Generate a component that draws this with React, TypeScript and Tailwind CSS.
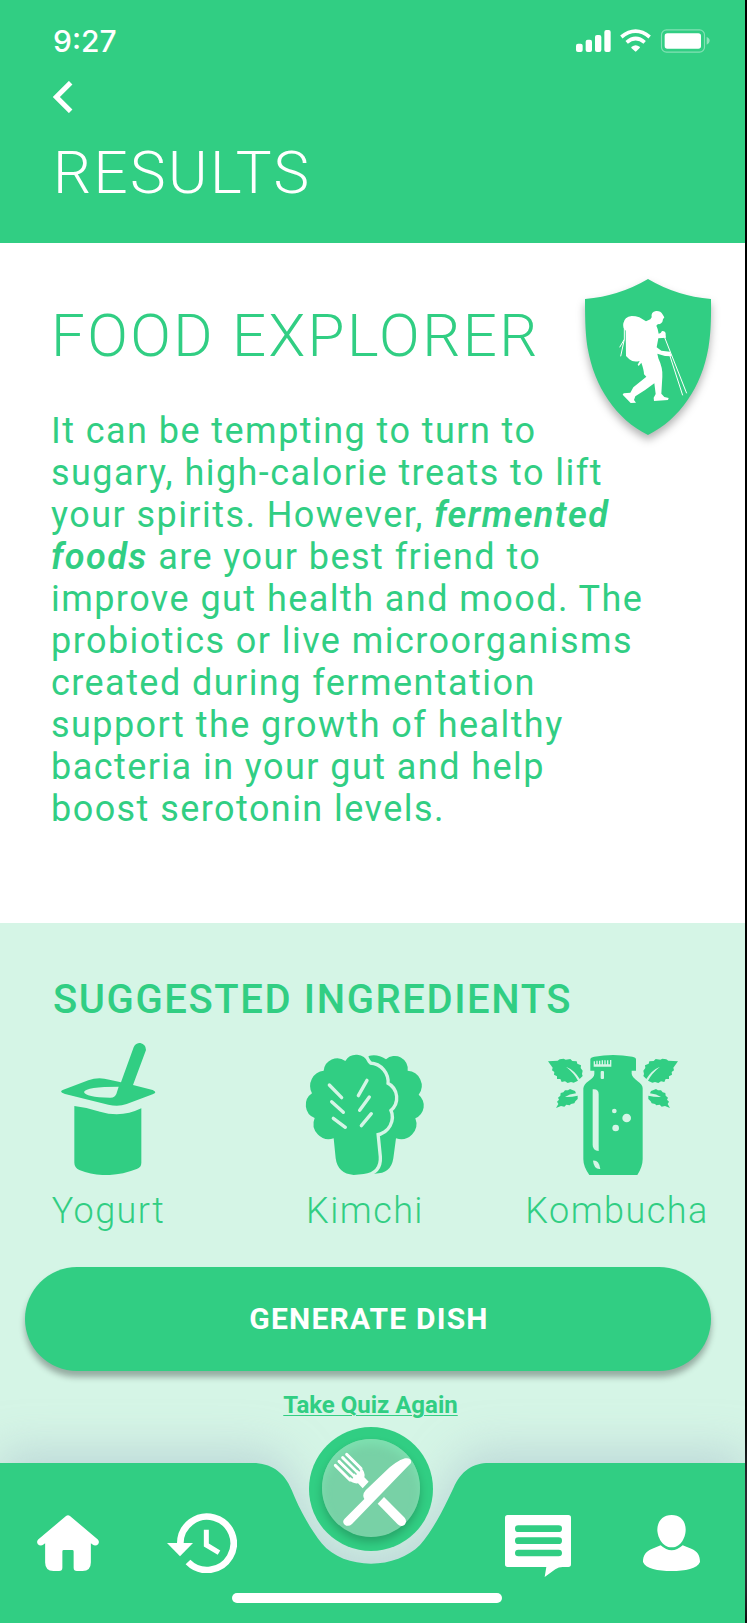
import React from "react";

function StatusIcons() {
  return (
    <svg className="h-6 w-[134px]" viewBox="76 87 402 72" role="img" aria-label="Signal, Wi-Fi and battery">
      <g fill="#fff">
        <rect x="76" y="131" width="20" height="25" rx="6" />
        <rect x="105" y="119" width="19" height="37" rx="6" />
        <rect x="133" y="105" width="19" height="51" rx="6" />
        <rect x="161" y="90" width="19" height="66" rx="6" />
        <path d="M243 140 Q255 131 267 140 Q269 142 267 144 L257 154 Q255 156 253 154 L242 144 Q241 142 243 140Z" />
        <rect x="342" y="100" width="109" height="46" rx="8" />
      </g>
      <g fill="none" stroke="#fff" strokeWidth="11">
        <path d="M212 111 Q255 76 297 111" />
        <path d="M228 127 Q255 104 282 127" />
      </g>
      <rect x="332.500" y="89.500" width="129" height="67" rx="15" fill="none" stroke="#fff" strokeOpacity="0.4" strokeWidth="3.500" />
      <path d="M468 111 Q478 116 477 123 Q477 130 468 134Z" fill="#fff" fillOpacity="0.45" />
    </svg>
  );
}

function ShieldBadge() {
  return (
    <svg
      className="absolute right-[34px] top-9 h-[156px] w-[126px] overflow-visible drop-shadow-[0_5px_4px_rgba(0,0,0,0.3)]"
      viewBox="45 57 378 468"
      role="img"
      aria-label="Explorer badge"
    >
      <path
        fill="#31ce83"
        d="M234 57 Q320 108 423 117 C424 190 421 230 415 265 C395 380 330 478 234 525 C138 478 73 380 53 265 C47 230 45 190 45 117 Q148 108 234 57Z"
      />
      <path
        fill="#fff"
        d="M208 172 L228 184 L241 178 L245 172 Q242 156 258 153 Q272 152 277 162 L283 172 L279 178 L277 186 Q272 194 264 192 L259 197 Q264 206 266 221 L272 219 L276 213 Q289 213 287 226 L288 233 L265 235 L260 262 L274 272 L300 275 L305 289 L285 288 L262 281 L265 295 Q279 325 277 350 L274 401 L283 411 L296 414 L294 420 L252 423 L251 413 L257 402 L253 370 Q225 392 196 409 L192 420 L198 428 L182 429 L158 404 L161 400 L181 398 L190 382 L229 350 L222 343 Q222 330 214 308 L206 318 L203 314 L209 303 Q190 308 178 298 L168 288 L167 212 Q157 204 160 190 Q163 171 185 168 Q197 168 208 172Z"
      />
      <g fill="none" stroke="#fff" strokeWidth="3">
        <path d="M163 203 V238 L149 262 M163 238 L152 289" />
        <path d="M283 230 L350 400 M299 285 L338 406" />
      </g>
    </svg>
  );
}

function YogurtIcon() {
  return (
    <svg className="h-[132px] w-[95px]" viewBox="63 39 285 396" fill="#31ce83" aria-hidden="true">
      <path
        fillRule="evenodd"
        d="M68 180 L145 151 Q175 139 208 149 L243 157 L281 52 Q287 38 301 39 Q318 43 318 60 L279 165 L338 180 Q354 187 338 193 L260 222 Q235 231 205 224 L75 192 Q56 186 68 180Z M132 186 Q138 170 236 170 L229 192 Q224 204 210 203 Q136 202 132 186Z"
      />
      <path d="M103 228 Q140 232 180 245 Q245 264 304 235 V398 Q304 412 290 417 Q200 452 118 420 Q103 412 103 398Z" />
    </svg>
  );
}

function KimchiIcon() {
  const front =
    "M228 98 A38 38 0 0 0 160 93 A41 41 0 0 0 95 122 A46 46 0 0 0 60 190 A42 42 0 0 0 68 264 A46 46 0 0 0 125 325 L131 385 Q137 431 185 435 L215 432 Q263 425 260 380 L253 310 A49 49 0 0 0 291 240 A45 45 0 0 0 283 163 A52 52 0 0 0 234 104Z";
  return (
    <svg className="h-[120px] w-[116px] overflow-visible" viewBox="45 75 348 360" aria-hidden="true">
      <path
        fill="#31ce83"
        d="M230 78 Q255 70 282 88 A39 39 0 0 1 347 122 A45 45 0 0 1 380 194 A42 42 0 0 1 370 265 A46 46 0 0 1 312 325 L304 385 Q297 433 244 431 L250 300 L220 120Z"
      />
      <path d={front} fill="none" stroke="#d5f5e6" strokeWidth="20" />
      <path d={front} fill="#31ce83" />
      <path
        d="M112 165 L149 203 M119 215 L154 247 M124 265 L160 292 M225 151 L199 197 M232 201 L203 241 M238 251 L208 287"
        stroke="#d5f5e6"
        strokeWidth="10"
        strokeLinecap="round"
      />
    </svg>
  );
}

function MintLeaves() {
  return (
    <>
      <path d="M111 94 L140 92 L146 88 L158 86 L164 89 L178 87 L184 93 L197 94 L199 101 L210 106 L209 114 L215 122 L213 132 L215 138 L206 147 Q190 120 165 110 Q190 130 201 152 L188 158 L180 156 L170 159 L162 154 L152 156 L148 147 L138 147 L138 139 L129 134 L130 126 L123 121 L125 113Z" />
      <path d="M135 234 L142 222 L138 215 L144 209 L141 203 L148 197 L149 189 L157 187 L162 181 L171 181 L177 177 L186 181 L192 183 L195 190 Q175 192 162 201 Q180 202 200 197 L200 207 L193 214 L190 220 L180 222 L176 226 L166 224 L160 230 L150 228Z" />
    </>
  );
}

function KombuchaIcon() {
  return (
    <svg className="h-[120px] w-[138px]" viewBox="111 75 414 360" fill="#31ce83" aria-hidden="true">
      <MintLeaves />
      <g transform="translate(612 0) scale(-1 1)">
        <MintLeaves />
      </g>
      <path d="M238 88 Q238 82 250 80 Q306 70 364 80 Q375 82 375 88 V122 H362 V132 Q364 142 380 154 Q395 165 395 175 V388 Q395 410 379 435 H235 Q217 410 217 388 V175 Q219 163 232 154 Q250 142 250 132 V122 H238Z" />
      <g fill="#d5f5e6">
        <rect x="269" y="123" width="10" height="24" rx="3" />
        <path d="M245 178 Q263 176 263 192 V363 Q245 362 245 345Z" />
        <path d="M246 392 Q264 390 268 417 Q249 419 246 392Z" />
        <circle cx="310" cy="243" r="7" />
        <circle cx="347" cy="264" r="13" />
        <circle cx="314" cy="294" r="10" />
        <path d="M248 94 L252 94 V103 H256 V92 H260 V103 H264 V92 H268 V103 H272 V91 H276 V103 H280 V91 H284 V103 H288 V91 H292 V103 H297 V90 H301 V110 H248Z" />
      </g>
    </svg>
  );
}

function HomeIcon() {
  return (
    <svg className="h-14 w-[62px]" viewBox="111 104 186 169" fill="#fff" aria-hidden="true">
      <path d="M198 107 Q204 102 210 107 L294 178 Q300 185 295 192 Q287 199 278 193 L273 189 V247 Q273 272 248 273 H231 Q221 273 221 263 V214 Q221 210 217 210 H191 Q187 210 187 214 V263 Q187 273 177 273 H160 Q135 272 135 247 V189 L130 193 Q121 199 113 192 Q108 185 114 178Z" />
    </svg>
  );
}

function HistoryIcon() {
  return (
    <svg className="h-[60px] w-[70px]" viewBox="501 99 210 180" aria-hidden="true">
      <path d="M541 192 V189 A80 80 0 1 1 564 246" fill="none" stroke="#fff" strokeWidth="20" />
      <path d="M501 189 H579 L540 229Z" fill="#fff" />
      <path d="M619 149 V195 L657 218" fill="none" stroke="#fff" strokeWidth="15" />
    </svg>
  );
}

function ChatIcon() {
  return (
    <svg className="h-[62px] w-[66px]" viewBox="75 105 198 186" aria-hidden="true">
      <path
        fill="#fff"
        d="M83 105 H265 Q273 105 273 113 V253 Q273 261 265 261 H248 Q236 261 226 268 L194 291 L199 261 H83 Q75 261 75 253 V113 Q75 105 83 105Z"
      />
      <path d="M115 146 H236 M115 182 H236 M115 219 H236" stroke="#31ce83" strokeWidth="20" strokeLinecap="round" />
    </svg>
  );
}

function UserIcon() {
  return (
    <svg className="h-14 w-[57px]" viewBox="489 105 171 168" fill="#fff" aria-hidden="true">
      <path d="M575 105 C602 105 617 124 617 149 C617 168 605 202 575 202 C545 202 532 168 532 149 C532 124 548 105 575 105Z" />
      <path d="M542 196 Q575 226 608 196 L634 206 C652 213 660 226 660 246 C653 266 615 273 575 273 C534 273 496 266 489 246 C489 226 497 215 515 207Z" />
    </svg>
  );
}

function CutleryIcon() {
  return (
    <svg className="size-[98px]" viewBox="243 177 294 294" fill="#fff" aria-hidden="true">
      <path d="M311 416 L370 357 Q362 344 374 331 L432 275 Q465 243 492 235 Q513 232 510 249 L333 432 Q322 442 311 434 Q302 425 311 416Z" />
      <path d="M410 371 L429 351 L491 413 Q499 424 491 434 Q480 442 470 433Z" />
      <path d="M322 298 L358 262 Q374 276 370 292 L383 305 L365 325 L351 310 Q334 312 322 298Z" />
      <path
        d="M283 256 L327 300 M294 244 L337 287 M305 233 L348 276 M317 223 L360 266"
        stroke="#fff"
        strokeWidth="9"
        strokeLinecap="round"
      />
      <path d="M292 253 L334 293 M303 242 L345 282 M315 232 L355 272" stroke="#78d1a6" strokeWidth="5" strokeLinecap="round" />
    </svg>
  );
}

const ingredients = [
  { name: "Yogurt", Icon: YogurtIcon },
  { name: "Kimchi", Icon: KimchiIcon },
  { name: "Kombucha", Icon: KombuchaIcon },
];

function TabBar() {
  return (
    <nav aria-label="Main" className="relative h-40">
      <div className="flex h-full drop-shadow-[0_-12px_22px_rgba(163,186,202,0.5)]">
        <div className="flex-1 bg-[#31ce83]" />
        <svg className="h-40 w-[239px]" viewBox="39 249 717 480" aria-hidden="true">
          <path
            fill="#31ce83"
            d="M39 249 C90 249 133 275 155 330 C180 393 215 452 245 490 C280 532 335 551 393 551 C450 551 505 530 540 495 C575 455 605 400 640 325 C662 272 700 249 747 249 H756 V729 H39Z"
          />
        </svg>
        <div className="flex-1 bg-[#31ce83]" />
      </div>
      <div className="absolute inset-0 flex flex-col justify-between pb-5 pt-[50px]">
        <div className="flex items-start justify-between pl-[37px] pr-[45px]">
          <div className="flex items-center gap-[68px]">
            <button type="button" aria-label="Home"><HomeIcon /></button>
            <button type="button" aria-label="History"><HistoryIcon /></button>
          </div>
          <div className="flex items-start gap-[72px] pt-0.5">
            <button type="button" aria-label="Messages"><ChatIcon /></button>
            <button type="button" aria-label="Profile"><UserIcon /></button>
          </div>
        </div>
        <div className="flex justify-center pr-3">
          <div className="h-2.5 w-[270px] rounded-full bg-white" />
        </div>
      </div>
      <div className="absolute inset-x-0 -top-9 flex justify-center pr-1">
        <button
          type="button"
          aria-label="Dishes"
          className="flex size-[124px] items-center justify-center rounded-full bg-[#31ce83] pb-0.5"
        >
          <span className="rounded-full bg-[#78d1a6] shadow-[0_5px_8px_rgba(0,0,0,0.2),inset_0_6px_8px_#7ee0b0]">
            <CutleryIcon />
          </span>
        </button>
      </div>
    </nav>
  );
}

export default function App() {
  return (
    <div className="flex min-h-screen flex-col border-r-2 border-black bg-[#d5f5e6] font-['Roboto',sans-serif] text-[#31ce83]">
      <header className="bg-[#31ce83] pb-[35px] pl-[53px] pr-[35px] pt-[23px] text-white">
        <div className="flex items-center justify-between">
          <span className="font-['Inter',sans-serif] text-[30px] font-medium leading-9">9:27</span>
          <StatusIcons />
        </div>
        <button type="button" aria-label="Back" className="mt-[22px] block">
          <svg className="h-8 w-5" viewBox="160 243 60 96" aria-hidden="true">
            <path d="M213 248 L170 291 L213 334" fill="none" stroke="#fff" strokeWidth="15" />
          </svg>
        </button>
        <h1 className="mt-[25px] text-[60px] font-light leading-[70px] tracking-[0.04em]">RESULTS</h1>
      </header>

      <main className="flex flex-1 flex-col">
        <section className="relative bg-white pb-[93px] pl-[51px] pr-9 pt-[58px]">
          <ShieldBadge />
          <h2 className="text-[60px] font-light leading-[70px] tracking-[0.04em]">FOOD EXPLORER</h2>
          <p className="mt-[39px] max-w-[600px] text-[36px] leading-[42px] tracking-[0.04em]">
            It can be tempting to turn to sugary, high-calorie treats to lift your spirits. However,{" "}
            <em className="font-semibold">fermented foods</em> are your best friend to improve gut health and mood. The
            probiotics or live microorganisms created during fermentation support the growth of healthy bacteria in your
            gut and help boost serotonin levels.
          </p>
        </section>

        <section className="flex flex-1 flex-col pb-11 pt-[53px]">
          <h3 className="pl-[53px] text-[40px] font-medium leading-[48px] tracking-[0.04em]">SUGGESTED INGREDIENTS</h3>
          <ul className="mr-6 mt-[19px] grid grid-cols-[217fr_296fr_208fr]">
            {ingredients.map(({ name, Icon }) => (
              <li key={name} className="flex flex-col items-center">
                <div className="flex h-[132px] items-end">
                  <Icon />
                </div>
                <span className="mt-[15px] text-[36px] font-light leading-[42px] tracking-[0.04em]">{name}</span>
              </li>
            ))}
          </ul>
          <button
            type="button"
            className="ml-[25px] mr-[34px] mt-[35px] h-[104px] rounded-full bg-[#31ce83] pb-0.5 pl-0.5 text-[30px] font-bold tracking-[0.04em] text-white shadow-[0_6px_6px_rgba(0,0,0,0.3)]"
          >
            GENERATE DISH
          </button>
          <div className="mt-5 flex justify-center pr-1">
            <a href="#quiz" className="text-[24px] font-bold leading-7 underline decoration-1 underline-offset-2">
              Take Quiz Again
            </a>
          </div>
        </section>
      </main>

      <TabBar />
    </div>
  );
}
